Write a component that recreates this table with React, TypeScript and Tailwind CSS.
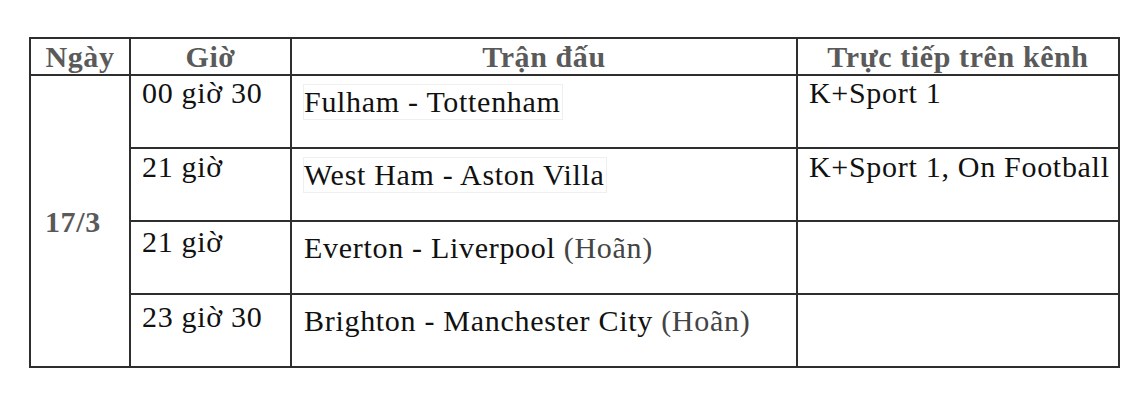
import React from "react";

const rows = [
  { time: "00 giờ 30", match: "Fulham - Tottenham", boxed: true, hoan: false, channel: "K+Sport 1", tpt: "pt-0", cpt: "pt-0" },
  { time: "21 giờ", match: "West Ham - Aston Villa", boxed: true, hoan: false, channel: "K+Sport 1, On Football", tpt: "pt-[1px]", cpt: "pt-[1px]" },
  { time: "21 giờ", match: "Everton - Liverpool", boxed: false, hoan: true, channel: "", tpt: "pt-[3px]", cpt: "pt-0" },
  { time: "23 giờ 30", match: "Brighton - Manchester City", boxed: false, hoan: true, channel: "", tpt: "pt-[5px]", cpt: "pt-0" },
];

export default function App() {
  return (
    <div className="w-[1144px] h-[404px] bg-white pt-[37px] pl-[29px] font-['Liberation_Serif','Times_New_Roman',serif] text-[30px] leading-[34px] tracking-[0.7px] text-[#111]">
      <div className="grid w-[1091px] grid-cols-[98px_159px_504px_320px] grid-rows-[35px_71px_71px_71px_71px] gap-[2px] bg-[#2e2e2e] p-[2px]">
        <div className="flex items-center justify-center bg-white font-bold tracking-[0.6px] text-[#5a5a5a]">Ngày</div>
        <div className="flex items-center justify-center bg-white font-bold tracking-[0.6px] text-[#5a5a5a]">Giờ</div>
        <div className="flex items-center justify-center bg-white font-bold tracking-[0.6px] text-[#5a5a5a]">Trận đấu</div>
        <div className="flex items-center justify-center bg-white font-bold tracking-[0.6px] text-[#5a5a5a]">Trực tiếp trên kênh</div>

        <div className="row-span-4 flex items-center bg-white pl-[14px] pt-[2px] font-bold tracking-[0.6px] text-[#5a5a5a]">17/3</div>

        {rows.map((r, i) => (
          <React.Fragment key={i}>
            <div className={`bg-white pl-[11px] ${r.tpt}`}>{r.time}</div>
            <div className="bg-white pl-[11px] pt-[8px]">
              {r.boxed ? (
                <span className="inline-block border border-[#efefef] pr-px">{r.match}</span>
              ) : (
                <span className="inline-block border border-transparent">
                  {r.match}
                  {r.hoan && <span className="text-[#444]"> (Hoãn)</span>}
                </span>
              )}
            </div>
            <div className={`bg-white pl-[11px] ${r.cpt}`}>{r.channel}</div>
          </React.Fragment>
        ))}
      </div>
    </div>
  );
}
